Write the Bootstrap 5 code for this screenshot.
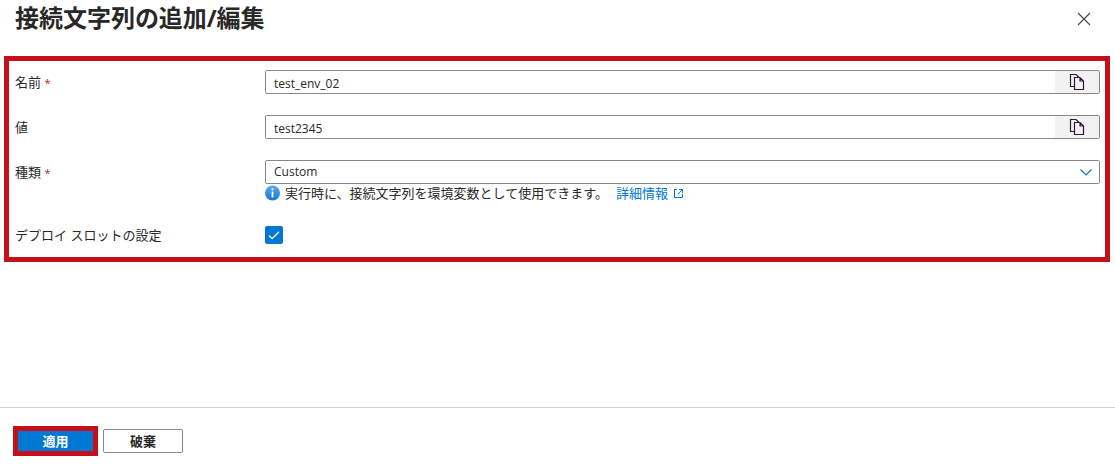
<!DOCTYPE html>
<html lang="ja">
<head>
<meta charset="utf-8">
<meta name="viewport" content="width=device-width, initial-scale=1">
<title>接続文字列の追加/編集</title>
<link href="https://cdn.jsdelivr.net/npm/bootstrap@5.3.0/dist/css/bootstrap.min.css" rel="stylesheet">
<style>
  body { font-family: "Open Sans", "Noto Sans CJK JP", sans-serif; font-size: 13px; line-height: 18px; color: #292827; background: #fff; }
  .panel-head { height: 56px; padding: 0 15px; }
  .panel-title { font-size: 24px; line-height: 36px; font-weight: 700; font-feature-settings: "palt"; }
  .close-btn { width: 32px; height: 32px; margin-top: 3px; }
  .marked { border: 5px solid #c50f1a; }
  .settings { margin: 0 5px 0 4px; padding: 9px 5px 10px 6px; gap: 21px; }
  .setting-label { width: 250px; line-height: 24px; height: 24px; }
  .required { color: #a4262c; font-size: 11px; }
  .field { height: 24px; border: 1px solid #8a8886; border-radius: 2px; overflow: hidden; }
  .field .form-control { font-size: 12px; line-height: 18px; padding: 3px 8px 0; color: #292827; min-height: 0; }
  .field .form-select { height: 22px; font-size: 12px; line-height: 18px; padding: 1px 30px 1px 8px; color: #292827; background-position: right 6px center; background-size: 14px 14px;
    background-image: url("data:image/svg+xml,%3csvg xmlns='http://www.w3.org/2000/svg' viewBox='0 0 14 14'%3e%3cpath fill='none' stroke='%23106ebe' stroke-width='1.200' d='M1.500 4.500 7 10l5.500-5.500'/%3e%3c/svg%3e"); }
  .copy-btn { width: 44px; background: #f2f2f2; }
  .form-check-input.slot-check { width: 18px; height: 18px; border-radius: 2px; border-color: #0078d4; }
  .form-check-input.slot-check:checked { background-color: #0078d4; border-color: #0078d4;
    background-size: 16px 16px;
    background-image: url("data:image/svg+xml,%3csvg xmlns='http://www.w3.org/2000/svg' viewBox='0 0 16 16'%3e%3cpath fill='none' stroke='white' stroke-width='1.300' d='m3 8.500 3.200 3.200L13 4.800'/%3e%3c/svg%3e"); }
  .info-link { color: #0078d4; }
  .panel-foot { border-top: 1px solid #d2d0ce; padding: 18px 13px 10px; gap: 5px; }
  .action { font-size: 13px; line-height: 18px; font-weight: 700; border-radius: 2px; padding: 0; }
  .action-apply { width: 75px; height: 20px; color: #fff; background: #0078d4; border-radius: 0; }
  .action-discard { width: 80px; height: 24px; color: #292827; border: 1px solid #8a8886; background: #fff; }
</style>
</head>
<body>
<form class="d-flex flex-column min-vh-100">
  <header class="panel-head d-flex align-items-start justify-content-between">
    <h1 class="panel-title m-0">接続文字列の追加/編集</h1>
    <button type="button" class="close-btn btn border-0 p-0 d-flex align-items-center justify-content-center" aria-label="閉じる">
      <svg width="14" height="14" viewBox="0 0 14 14" fill="none" stroke="#484644" stroke-width="1.100"><path d="M1 1l12 12M13 1L1 13"/></svg>
    </button>
  </header>

  <main class="settings marked d-flex flex-column">
    <div class="d-flex">
      <label class="setting-label flex-shrink-0" for="name">名前 <span class="required">*</span></label>
      <div class="field d-flex flex-grow-1">
        <input id="name" type="text" class="form-control border-0 rounded-0" value="test_env_02" required>
        <button type="button" class="copy-btn btn border-0 rounded-0 p-0 flex-shrink-0 d-flex align-items-center justify-content-center" aria-label="名前をコピー">
          <svg width="16" height="16" viewBox="0 0 16 16" fill="none" stroke="#2b1a2b" stroke-width="1.200"><path d="M5 12.500H1.500v-12H7l3 3M5.500 3.500H11L14.500 7v8.500h-9zM11 3.500V7h3.500"/></svg>
        </button>
      </div>
    </div>
    <div class="d-flex">
      <label class="setting-label flex-shrink-0" for="value">値</label>
      <div class="field d-flex flex-grow-1">
        <input id="value" type="text" class="form-control border-0 rounded-0" value="test2345">
        <button type="button" class="copy-btn btn border-0 rounded-0 p-0 flex-shrink-0 d-flex align-items-center justify-content-center" aria-label="値をコピー">
          <svg width="16" height="16" viewBox="0 0 16 16" fill="none" stroke="#2b1a2b" stroke-width="1.200"><path d="M5 12.500H1.500v-12H7l3 3M5.500 3.500H11L14.500 7v8.500h-9zM11 3.500V7h3.500"/></svg>
        </button>
      </div>
    </div>
    <div class="d-flex">
      <label class="setting-label flex-shrink-0" for="kind">種類 <span class="required">*</span></label>
      <div class="flex-grow-1">
        <div class="field">
          <select id="kind" class="form-select border-0 rounded-0"><option selected>Custom</option></select>
        </div>
        <div class="d-flex align-items-center">
          <svg class="me-1 flex-shrink-0" width="16" height="16" viewBox="0 0 16 16" aria-hidden="true">
            <defs><linearGradient id="info-fill" x2="0" y2="1"><stop stop-color="#5ea9ea"/><stop offset="1" stop-color="#0f78d4"/></linearGradient></defs>
            <circle cx="7.500" cy="8" r="7.500" fill="url(#info-fill)"/>
            <circle cx="7.500" cy="4.300" r="1.100" fill="#fff"/><path fill="#fff" d="M6.600 6.500h1.800v6H6.600z"/>
          </svg>
          <span>実行時に、接続文字列を環境変数として使用できます。</span>
          <a href="#" class="info-link text-decoration-none d-flex align-items-center ms-2">詳細情報
            <svg class="ms-1" width="12" height="12" viewBox="0 0 12 12" fill="none" stroke="currentColor"><path d="M5 2.500H2.500v8h8V7M7 2.500h3.500V6M10.500 2.500 6 7"/></svg>
          </a>
        </div>
      </div>
    </div>
    <div class="d-flex">
      <label class="setting-label flex-shrink-0" for="slot">デプロイ スロットの設定</label>
      <div class="d-flex align-items-center">
        <input id="slot" type="checkbox" class="slot-check form-check-input m-0" checked>
      </div>
    </div>
  </main>

  <footer class="panel-foot mt-auto d-flex align-items-center">
    <div class="marked d-flex"><button type="submit" class="action action-apply btn border-0">適用</button></div>
    <button type="button" class="action action-discard btn">破棄</button>
  </footer>
</form>
<script src="https://cdn.jsdelivr.net/npm/bootstrap@5.3.0/dist/js/bootstrap.bundle.min.js"></script>
</body>
</html>
